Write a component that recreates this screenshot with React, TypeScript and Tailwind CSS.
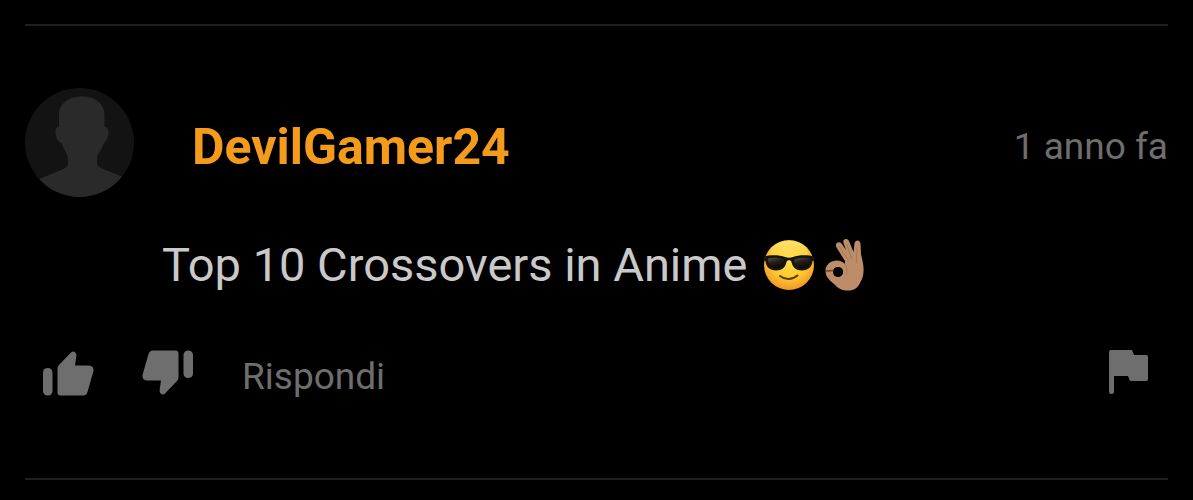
import type { ReactNode } from "react";

function Avatar() {
  return (
    <svg viewBox="0 0 109 109" className="size-[109px] shrink-0" role="img" aria-label="Avatar">
      <defs>
        <clipPath id="avatar-clip">
          <circle cx="54.5" cy="54.5" r="54.5" />
        </clipPath>
      </defs>
      <g clipPath="url(#avatar-clip)">
        <rect width="109" height="109" fill="#131313" />
        <path
          fill="#2a2a2a"
          d="M57 8.500C43 8.500 34 16 34 27V38.500C30.500 39 30 43 31 48C32 52 34 54 37 55.500C38.500 62 43 66 43 71V75C43 79 40 80.500 35 82.500L14 91V109H98V89L81 82C75 80 72 78.500 72 75V69C73 65 77 62 78.500 55.500C81 54 82.500 51 83.300 47C84 42 83 39 79.500 38.500V27C79.500 16 71 8.500 57 8.500Z"
        />
      </g>
    </svg>
  );
}

function Sunglasses() {
  return (
    <svg viewBox="0 0 52 52" className="size-[52px]" role="img" aria-label="😎">
      <defs>
        <radialGradient id="face" cx="0.5" cy="0.4" r="0.62">
          <stop offset="0" stopColor="#ffe04a" />
          <stop offset="0.6" stopColor="#fdc92e" />
          <stop offset="1" stopColor="#f0902a" />
        </radialGradient>
        <linearGradient id="shine" x1="0" y1="0" x2="0" y2="1">
          <stop offset="0" stopColor="#fff3a0" stopOpacity="0.6" />
          <stop offset="1" stopColor="#ffe04a" stopOpacity="0" />
        </linearGradient>
        <linearGradient id="lens" x1="0" y1="0" x2="0.4" y2="1">
          <stop offset="0" stopColor="#55514a" />
          <stop offset="0.5" stopColor="#211e18" />
          <stop offset="1" stopColor="#0c0b08" />
        </linearGradient>
      </defs>
      <circle cx="26" cy="26" r="25" fill="url(#face)" />
      <ellipse cx="26" cy="13" rx="19" ry="11" fill="url(#shine)" />
      <path
        fill="#17140d"
        d="M0.500 17.500C8 15.500 17 16 22 18C24.500 19 27.500 19 30 18C35 16 44 15.500 51.500 17.500V21L49.500 22C49 28 45 31.500 39 31.500C33 31.500 29.500 28 28.500 23C28 20.500 24 20.500 23.500 23C22.500 28 19 31.500 13 31.500C7 31.500 3 28 2.500 22L0.500 21Z"
      />
      <path fill="url(#lens)" d="M5 19.500C10 18 17 18.500 21 20.500C21 25 18 29.500 13 29.500C8 29.500 5 26 5 19.500Z" />
      <path fill="url(#lens)" d="M47 19.500C42 18 35 18.500 31 20.500C31 25 34 29.500 39 29.500C44 29.500 47 26 47 19.500Z" />
      <path d="M17 37C22 41 29 41 34.500 36.500" fill="none" stroke="#5c3a12" strokeWidth="2" strokeLinecap="round" />
    </svg>
  );
}

function OkHand() {
  return (
    <svg viewBox="0 0 40 54" className="h-[54px] w-10" role="img" aria-label="👌🏽">
      <path
        fill="#bc8d68"
        fillRule="evenodd"
        d="M20 23L11.500 9.500C9.500 5.500 13.500 2.500 16.500 5.500L21 12L18.500 5C17 1 22 -0.500 24 3L28.500 14L29.500 5.500C30 1.500 35 1.500 35.500 5.500L36 16C37.500 23 39 27 38.500 34C38.500 39 36 43 34.500 46C32 51 27 53 21 52.500C15 52 12 49 9 46C4 41.500 0.500 39 0.500 32.500C0.500 26.500 6 22.500 12 22.500C15 22.500 18 24 20 26ZM13 29C9.500 29 7.500 31.500 8 34.500C8.500 38 11 39.500 14 39C17 38.500 18.500 36 18 33C17.500 30 16 29 13 29Z"
      />
      <path
        d="M14 8L23 22M21.500 6L27 21M32 10L31.500 25M20 26C22 29 22.500 32 21.500 36"
        fill="none"
        stroke="#9c6b45"
        strokeWidth="1"
        strokeLinecap="round"
        opacity="0.55"
      />
      <path d="M1 33L8 32.500" stroke="#6d4527" strokeWidth="1.500" strokeLinecap="round" />
    </svg>
  );
}

function Thumb({ down = false }: { down?: boolean }) {
  return (
    <svg viewBox="0 0 52 46" className={down ? "h-[46px] w-[52px] rotate-180" : "h-[46px] w-[52px]"} fill="#6e6e6e" aria-hidden="true">
      <rect x="1" y="18" width="9.500" height="27.500" rx="4.600" />
      <path d="M15.500 18.500Q15.500 16.500 17 15L29 2.500Q31 0.500 33 2.200Q34.700 3.600 34.400 5.500L33 15.500H47Q52 16 51.500 21L45.500 42Q44.500 45.500 41 45.500H18.500Q15.500 45.500 15.500 42.500Z" />
    </svg>
  );
}

function Flag() {
  return (
    <svg viewBox="0 0 39 44" className="h-11 w-[39px]" fill="#6e6e6e" aria-hidden="true">
      <path d="M2 0H23L25 5H37Q39 5 39 7V29Q39 31 37 31H21L19 26H5V41.500Q5 44 2.500 44Q0 44 0 41.500V2Q0 0 2 0Z" />
    </svg>
  );
}

function IconButton({ label, children }: { label: string; children: ReactNode }) {
  return (
    <button type="button" aria-label={label} className="block cursor-pointer">
      {children}
    </button>
  );
}

export default function App() {
  return (
    <main className="min-h-screen bg-black px-[25px] pt-6 font-['Roboto','Liberation_Sans',sans-serif]">
      <article className="border-y-2 border-[#1f1f1f] pt-[62px] pb-[79px]">
        <header className="flex items-center">
          <Avatar />
          <a href="#profile" className="ml-[58px] pt-2 text-[50px] leading-[56px] font-bold text-[#f49b1c]">
            DevilGamer24
          </a>
          <time className="ml-auto pt-2 text-[37px] leading-[44px] text-[#6e6e6e]">1 anno fa</time>
        </header>
        <div className="mt-10 ml-[137px] flex h-14 items-center text-[#c9c9c9]">
          <p className="text-[47px] leading-[56px]">Top 10 Crossovers in Anime</p>
          <span className="ml-4 flex items-center gap-2.5">
            <Sunglasses />
            <OkHand />
          </span>
        </div>
        <footer className="mt-[57px] flex items-start pr-5 pl-[17px]">
          <IconButton label="Mi piace">
            <Thumb />
          </IconButton>
          <span className="ml-12">
            <IconButton label="Non mi piace">
              <Thumb down />
            </IconButton>
          </span>
          <button type="button" className="ml-12 cursor-pointer pt-[5px] text-[37px] leading-[44px] text-[#6e6e6e]">
            Rispondi
          </button>
          <span className="ml-auto">
            <IconButton label="Segnala">
              <Flag />
            </IconButton>
          </span>
        </footer>
      </article>
    </main>
  );
}
